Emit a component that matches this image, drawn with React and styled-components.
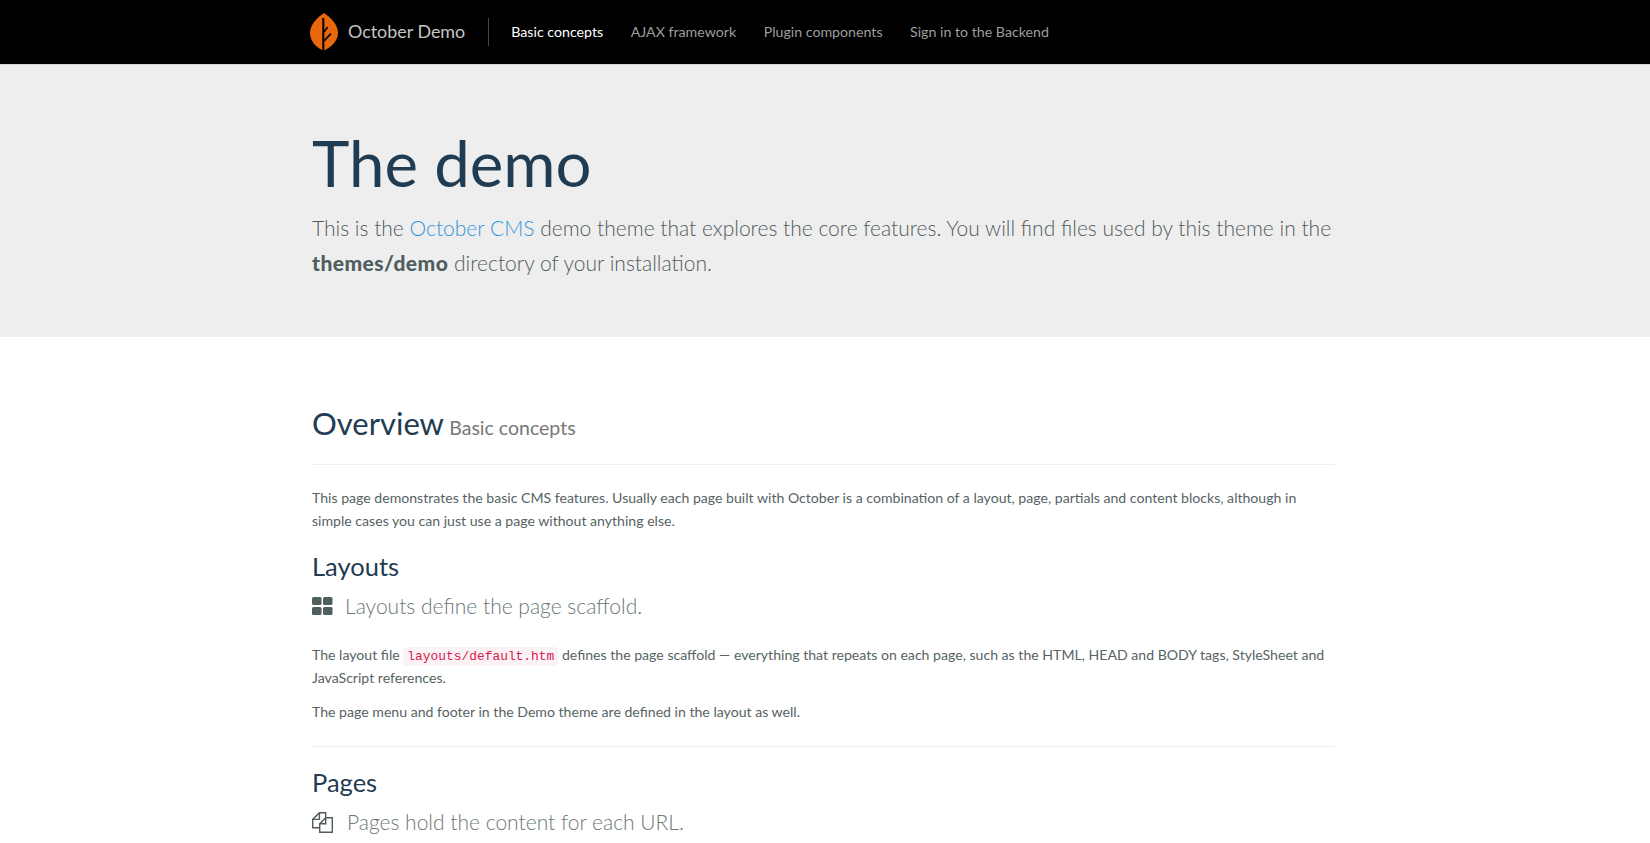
import styled, { createGlobalStyle } from "styled-components";

const GlobalStyle = createGlobalStyle`
  html, body {
    margin: 0;
    padding: 0;
    height: 843px;
    overflow: hidden;
    background: #fff;
  }
  body {
    font-family: Lato, "Liberation Sans", sans-serif;
    font-size: 14.1px;
    line-height: 23px;
    color: #566364;
  }
`;

const Navbar = styled.nav`
  height: 64px;
  background: #000;
  border-bottom: 1px solid #d8d8d8;
`;
const Container = styled.div`
  width: 1023px;
  margin: 0 0 0 312px;
`;
const NavInner = styled(Container)`
  display: flex;
  align-items: center;
  height: 63px;
`;
const Brand = styled.a`
  display: flex;
  align-items: center;
  gap: 10px;
  margin-left: -2px;
  padding-right: 23px;
  height: 28px;
  border-right: 1px solid #444;
  font-size: 17.9px;
  color: #c4c4c4;
`;
const NavLinks = styled.ul`
  display: flex;
  gap: 27.5px;
  margin: 0 0 0 22px;
  padding: 0;
  list-style: none;
`;
const NavLink = styled.li`
  font-size: 14.2px;
  color: ${(p) => (p.$active ? "#fff" : "#9d9d9d")};
`;
const Jumbotron = styled.header`
  background: #eee;
  height: 272px;
  padding-top: 63px;
  box-sizing: border-box;
`;
const Title = styled.h1`
  margin: 0;
  font-size: 63.5px;
  font-weight: 400;
  line-height: 69px;
  color: #1f3c53;
`;
const Lead = styled.p`
  margin: 13px 0 0;
  font-size: 21px;
  font-weight: 300;
  line-height: 35px;
  color: #515c5d;
  a {
    color: #3498db;
  }
  b {
    font-weight: 900;
    letter-spacing: 0.45px;
    color: #4f5f60;
  }
`;
const Main = styled(Container)`
  padding-top: 66px;
`;
const SectionHead = styled.div`
  padding-bottom: 16px;
  border-bottom: 1px solid #eee;
  margin-bottom: 21px;
`;
const H2 = styled.h2`
  margin: 0;
  font-size: 31px;
  font-weight: 400;
  line-height: 40px;
  color: #1f3c53;
  small {
    margin-left: -2px;
    font-size: 19.5px;
    color: #777;
  }
`;
const H3 = styled.h3`
  margin: 0;
  font-size: 25.5px;
  font-weight: 400;
  line-height: 30px;
  color: #1f3c53;
`;
const Para = styled.p`
  margin: 0 0 ${(p) => p.$gap || 11}px;
`;
const SubLead = styled.div`
  display: flex;
  align-items: center;
  gap: ${(p) => p.$gap || 12}px;
  margin: 10px 0 22px;
  font-size: 21px;
  font-weight: 300;
  line-height: 30px;
  color: #6b7778;
`;
const Code = styled.code`
  font-family: "Liberation Mono", monospace;
  font-size: 12.9px;
  line-height: 1;
  color: #d6204f;
  background: #fbf2f5;
  border-radius: 4px;
  padding: 2px 4px;
`;
const Rule = styled.hr`
  border: 0;
  border-top: 1px solid #eee;
  margin: 23px 0 20px;
`;

function Leaf() {
  return (
    <svg width="28" height="37" viewBox="0 0 28 37">
      <path d="M14 0C20 4 28 11 28 20C28 28 21 34 15 37H12C6 34 0 28 0 20C0 11 8 4 14 0Z" fill="#e8680b" />
      <path d="M12.3 5H14.3V37H12.3Z" fill="#000" />
      <path d="M14 19L17.7 14" stroke="#000" strokeWidth="1.6" fill="none" />
      <path d="M14 28L21 20.5" stroke="#000" strokeWidth="1.8" fill="none" />
    </svg>
  );
}

function GridIcon() {
  return (
    <svg width="21" height="18" viewBox="0 0 21 18" fill="#4f5f60">
      <rect x="0" y="0" width="9.5" height="8" rx="1.5" />
      <rect x="11" y="0" width="9.5" height="8" rx="1.5" />
      <rect x="0" y="10" width="9.5" height="8" rx="1.5" />
      <rect x="11" y="10" width="9.5" height="8" rx="1.5" />
    </svg>
  );
}

function PagesIcon() {
  return (
    <svg width="21" height="21" viewBox="0 0 21 21" fill="none" stroke="#515c5d" strokeWidth="1.4">
      <path d="M7.7 15.7H0.7V7.4L7.4 0.7H13.7V5.7" />
      <path d="M7.4 0.7V7.4H0.7" />
      <path d="M7.7 11.7L13.7 5.7H20.3V20.3H7.7Z" />
      <path d="M13.7 5.7V11.7H7.7" />
    </svg>
  );
}

export default function App() {
  return (
    <>
      <GlobalStyle />
      <Navbar>
        <NavInner>
          <Brand>
            <Leaf />
            October Demo
          </Brand>
          <NavLinks>
            <NavLink $active>Basic concepts</NavLink>
            <NavLink>AJAX framework</NavLink>
            <NavLink>Plugin components</NavLink>
            <NavLink>Sign in to the Backend</NavLink>
          </NavLinks>
        </NavInner>
      </Navbar>
      <Jumbotron>
        <Container>
          <Title>The demo</Title>
          <Lead>
            This is the <a>October CMS</a> demo theme that explores the core features. You will find files used by this theme in the <b>themes/demo</b> directory of your installation.
          </Lead>
        </Container>
      </Jumbotron>
      <Main>
        <SectionHead>
          <H2>
            Overview <small>Basic concepts</small>
          </H2>
        </SectionHead>
        <Para $gap={19}>
          This page demonstrates the basic CMS features. Usually each page built with October is a combination of a layout, page, partials and content blocks, although in simple cases you can just use a page without anything else.
        </Para>
        <H3>Layouts</H3>
        <SubLead>
          <GridIcon />
          Layouts define the page scaffold.
        </SubLead>
        <Para>
          The layout file <Code>layouts/default.htm</Code> defines the page scaffold — everything that repeats on each page, such as the HTML, HEAD and BODY tags, StyleSheet and JavaScript references.
        </Para>
        <Para>The page menu and footer in the Demo theme are defined in the layout as well.</Para>
        <Rule />
        <H3>Pages</H3>
        <SubLead $gap={14}>
          <PagesIcon />
          Pages hold the content for each URL.
        </SubLead>
      </Main>
    </>
  );
}
